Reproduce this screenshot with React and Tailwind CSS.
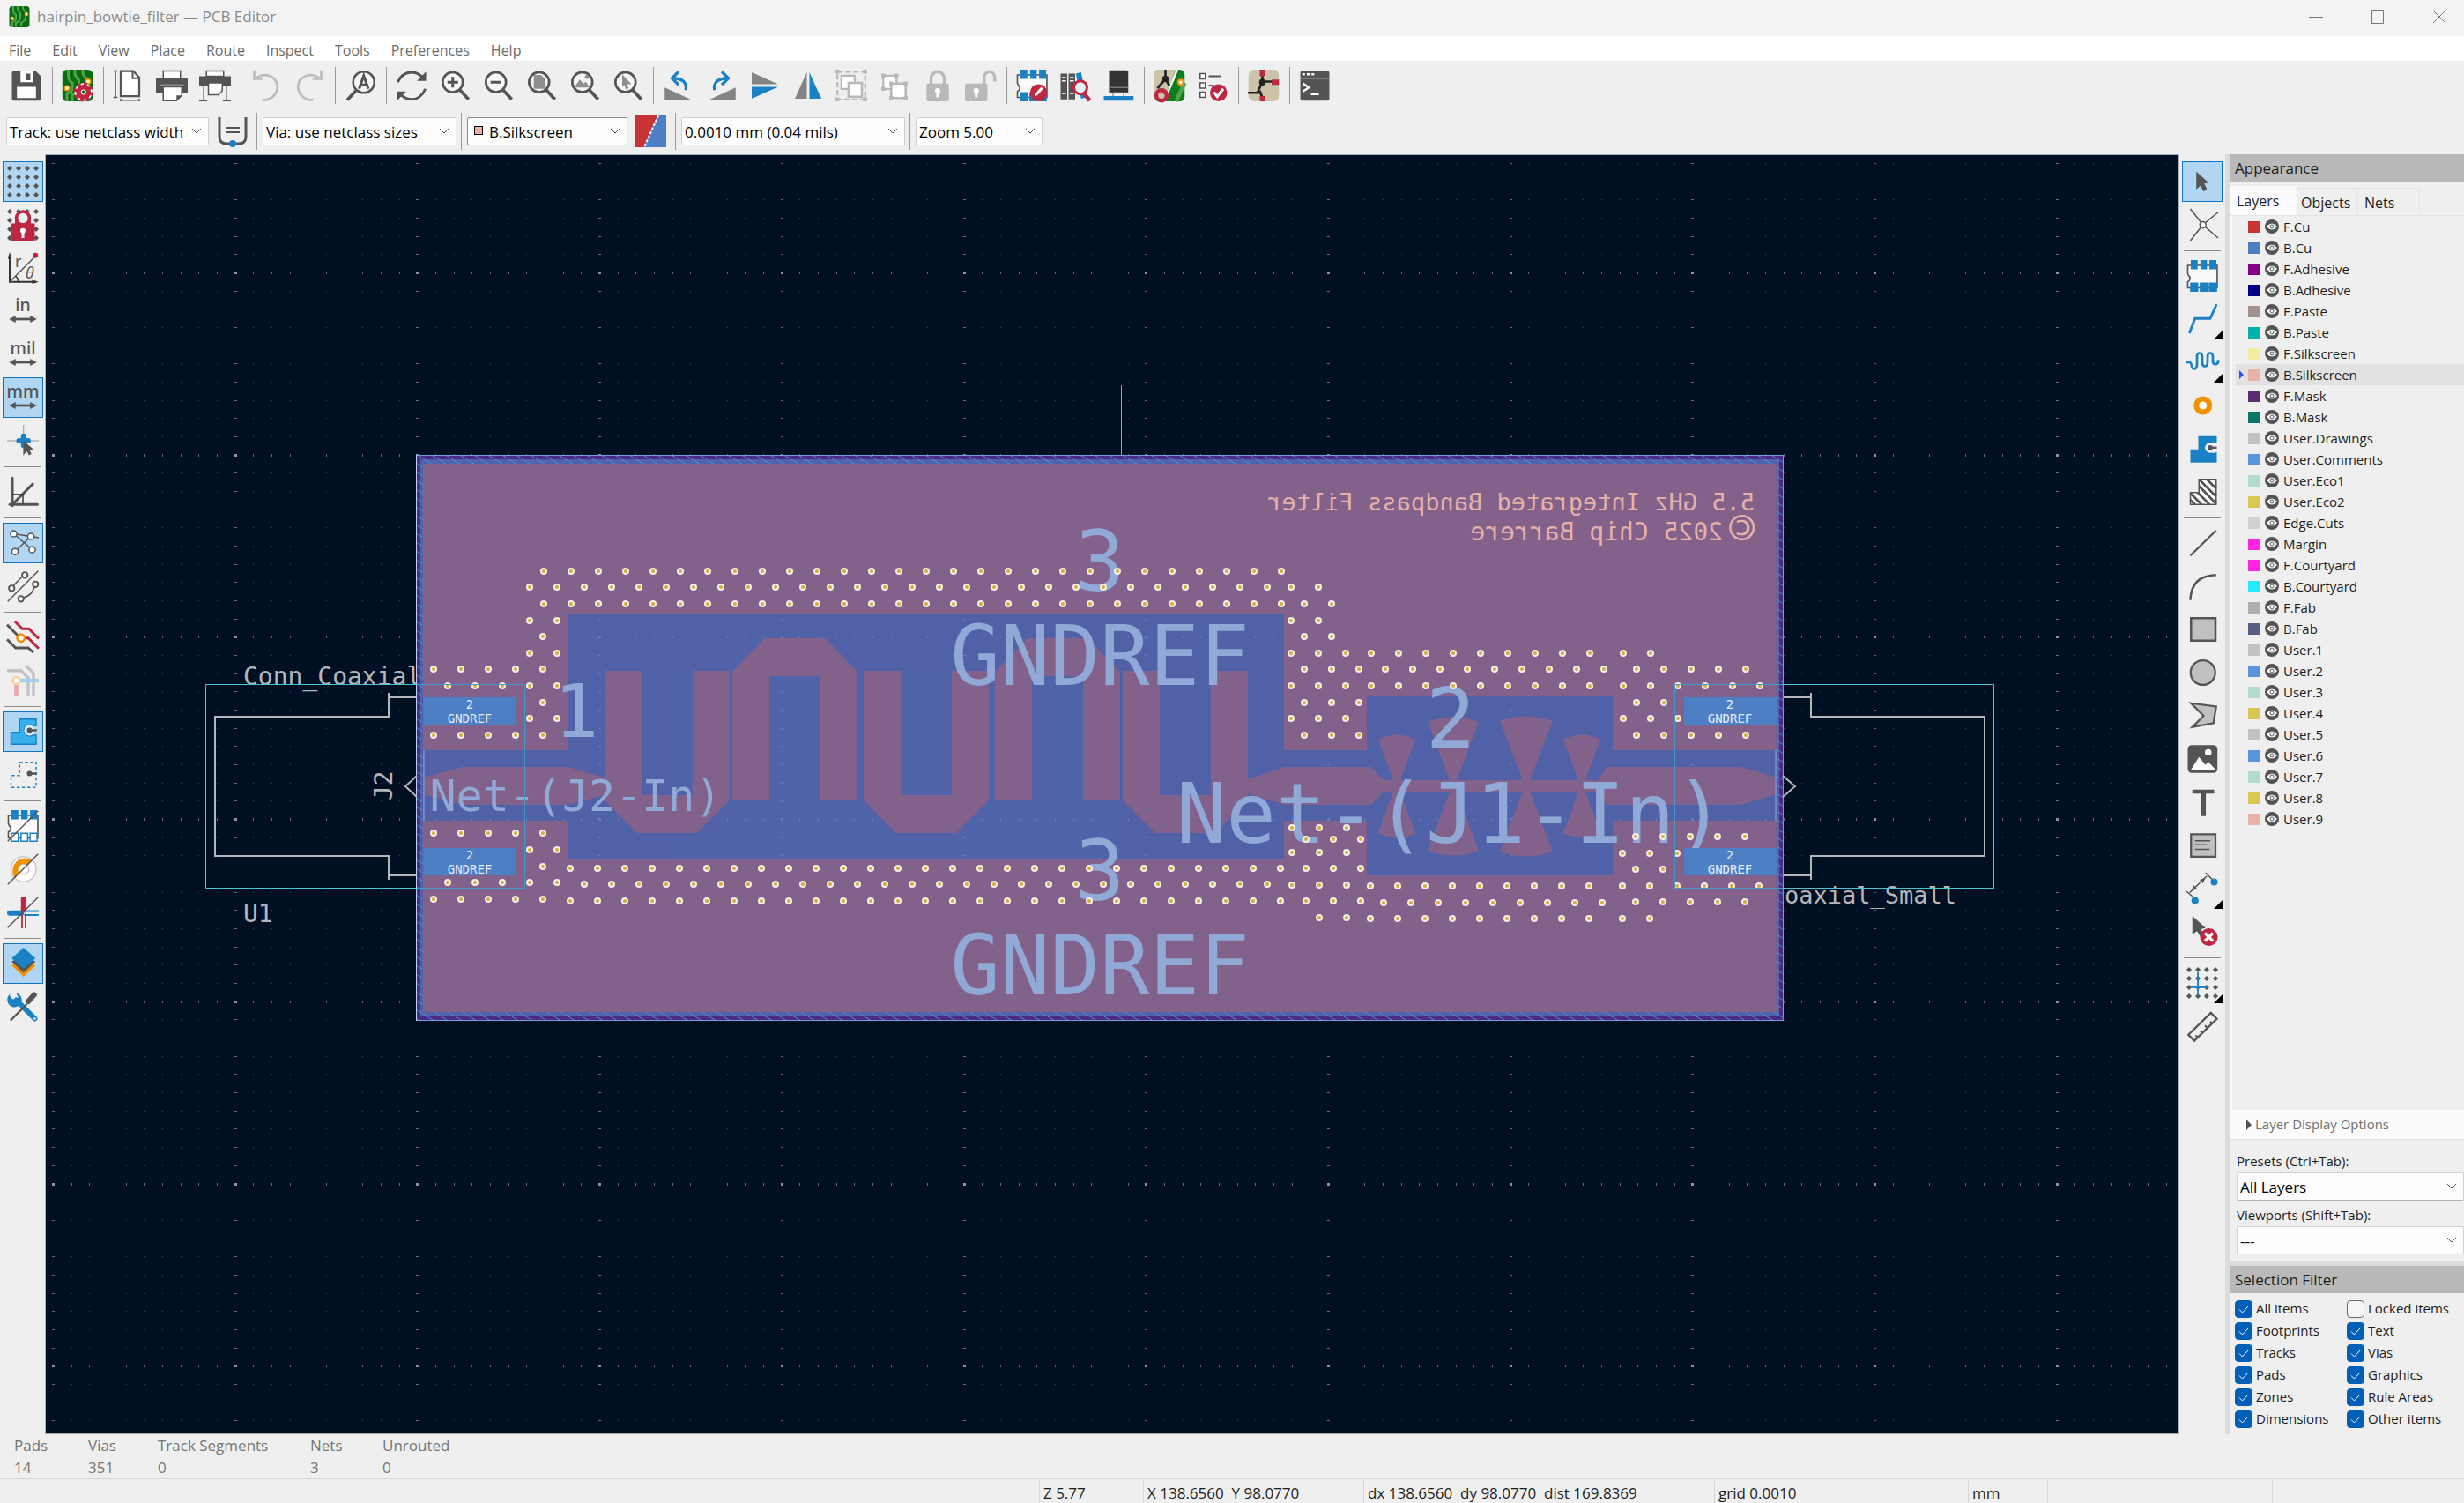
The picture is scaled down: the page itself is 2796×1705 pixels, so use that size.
import React, { useState } from "react";
import clsx from "clsx";

const G = "#545454";
const B = "#1a81c4";
const R = "#bf2641";
const O = "#f29100";
const L = "#b9b9b9";

const DOTS = [2, 8.7, 15.3, 22];

const Dots = () => (
  <g fill={G}>
    {DOTS.map((y) =>
      DOTS.map((x) => <path key={`${x}-${y}`} d={`M${x - 2} ${y}l2-2 2 2-2 2z`} />)
    )}
  </g>
);

const Glass = ({ children }) => (
  <g>
    <circle cx="10.5" cy="9.5" r="7.6" fill="#f6f6f6" stroke={G} strokeWidth="1.8" />
    <path d="M16 15.5l6.5 7" stroke={G} strokeWidth="2.4" />
    {children}
  </g>
);

const Chip = ({ hollow }) => (
  <g>
    <path d="M1 4H23.3V21H1V16.5C3 15.5 3.5 13 1.5 11.5L1 10Z" fill="#fafafa" stroke={G} strokeWidth="1.1" />
    <path d="M3.3 0h5.2v7H3.3zM10.6 0h5v7h-5zM17.4 0h5.3v7h-5.3z" fill={B} />
    <path
      d="M3.3 17.5h5.2v6H3.3zM10.6 17.5h5v6h-5zM17.4 17.5h5.3v6h-5.3z"
      fill={hollow ? "#fff" : B}
      stroke={B}
    />
  </g>
);

const Unit = ({ label }) => (
  <g>
    <text x="12" y="12" textAnchor="middle" fontSize="13" fill={G} className="font-['Noto_Sans'] font-medium">
      {label}
    </text>
    <path d="M5 18H19" stroke={G} strokeWidth="1.8" />
    <path d="M1.5 18l5-2.6v5.2zM22.5 18l-5-2.6v5.2z" fill={G} />
  </g>
);

const BoardArt = () => (
  <g>
    <rect x="0.5" width="23" height="24" rx="3.5" fill="#0a6b14" />
    <path
      d="M5 0v5q0 3 3 5v4q0 3-4 4v6M10 0v3q0 2 3 5v5q0 4-5 6v5M16 0v2q0 2 3 5v6q0 3-5 6v4"
      fill="none"
      stroke="#4ea549"
      strokeWidth="2"
    />
    <circle cx="4" cy="14" r="1.9" fill="#fff1c0" stroke={O} />
    <circle cx="20" cy="9" r="1.9" fill="#fff1c0" stroke={O} />
  </g>
);

const Padlock = ({ open, color }) => (
  <g>
    <path
      d={open ? "M14.5 11V6a4 4.5 0 0 1 8 0v3" : "M7 11V7a5 5.5 0 0 1 10 0v4"}
      fill="none"
      stroke={color}
      strokeWidth="2.2"
    />
    <rect x={open ? 0 : 3.5} y="10.5" width="17" height="13.5" rx="1.5" fill={color} />
    <g transform={open ? "translate(-3.5 0)" : undefined}>
      <circle cx="12" cy="16" r="2" fill="#fff" />
      <path d="M11 16h2v5h-2z" fill="#fff" />
    </g>
  </g>
);

const ICONS = {
  save: (
    <g>
      <path d="M1 2.5Q1 1 2.5 1H19l4 4v17q0 1.5-1.5 1.5h-19Q1 23.5 1 22z" fill={G} />
      <path d="M7.5 1h9.5v8.5H7.5zM4.8 13h14.4v8.5H4.8z" fill="#fff" />
      <path d="M12 3h3v5h-3z" fill={G} />
    </g>
  ),
  boardSetup: (
    <g>
      <BoardArt />
      <circle cx="16.5" cy="17" r="6.8" fill="#fff" />
      <circle cx="16.5" cy="17" r="3.8" fill="none" stroke={R} strokeWidth="3.6" />
      <circle cx="16.5" cy="17" r="6.2" fill="none" stroke={R} strokeWidth="2.4" strokeDasharray="2.6 2.27" />
      <circle cx="16.5" cy="17" r="1.3" fill="#0a6b14" />
    </g>
  ),
  page: (
    <g fill="none" stroke={G}>
      <path d="M6 1h9.5l4.5 5v14H6z" fill="#fff" strokeWidth="1.5" />
      <path d="M15 1v5.5h5" strokeWidth="1.3" />
      <path d="M2 1v20M.5 1h3M.5 21h3M6 23.2h14M6 22v2M20 22v2" strokeWidth="1" />
    </g>
  ),
  print: (
    <g>
      <path d="M5.5 1h13v5.5h-13z" fill="#fff" stroke={G} />
      <path d="M1.5 6h21q1.5 0 1.5 1.5V18H0V7.5Q0 6 1.5 6z" fill={G} />
      <path d="M5.5 13h14v6.5l-4 4h-10z" fill="#fff" stroke={G} />
      <path d="M15.5 23.5v-4h4z" fill={G} />
      <path d="M3 11.5h18" stroke="#8a8a8a" />
    </g>
  ),
  plot: (
    <g>
      <path d="M5.5 1h13v4h-13z" fill="#fff" stroke={G} />
      <path d="M0 5h24v7H0z" fill={G} />
      <path d="M7 10h10.5v6l-3 3H7z" fill="#fff" stroke={G} />
      <path d="M3.5 12v11.5M20.5 12v11.5M0 23.5h6M18 23.5h6M5 9.5h14" stroke={G} />
    </g>
  ),
  undo: (
    <path d="M3 .5v6.500h6.500M3.500 7Q9 3 14 4.500t6.500 7Q21 17 17 20.500T9 22.500" fill="none" stroke="#bcbcbc" strokeWidth="1.800" />
  ),
  redo: (
    <path d="M21 .5v6.500h-6.500M20.500 7Q15 3 10 4.500t-6.500 7Q3 17 7 20.500t8 2" fill="none" stroke="#bcbcbc" strokeWidth="1.800" />
  ),
  find: (
    <g>
      <circle cx="14.5" cy="9.5" r="8" fill="#f6f6f6" stroke={G} strokeWidth="1.7" />
      <path d="M8.5 16L2 23" stroke={G} strokeWidth="2.4" />
      <path d="M11 14.5l3.500-10 3.500 10M12 11.500h5" fill="none" stroke={G} strokeWidth="2" />
    </g>
  ),
  refresh: (
    <g fill="none" stroke={G} strokeWidth="1.9">
      <path d="M1.5 9.5Q5 2 12 2q6 0 9.5 5.5M22.5 14.5Q19 22.5 12 22.5 6 22.5 2.5 17" />
      <path d="M23 1.5v7h-7zM1 23.5v-7h7z" fill={G} stroke="none" />
    </g>
  ),
  zoomIn: <Glass><path d="M10.5 5.5v8M6.5 9.5h8" stroke={G} strokeWidth="2" /></Glass>,
  zoomOut: <Glass><path d="M6.5 9.5h8" stroke={G} strokeWidth="2" /></Glass>,
  zoomPage: <Glass><path d="M6.5 4h5.5l3 3v7.5H6.5z" fill="#8f8f8f" /></Glass>,
  zoomObjects: (
    <Glass>
      <path d="M4.5 13.5l4-6 3 3 1.500-1.500 3.500 4.500z" fill="#8f8f8f" />
      <circle cx="14" cy="5.5" r="1.6" fill="#8f8f8f" />
    </Glass>
  ),
  zoomSelection: <Glass><path d="M8 3.5l7 7.5h-3.500l1.500 3-2 1-1.500-3.500L8 13z" fill="#8f8f8f" /></Glass>,
  rotateCcw: (
    <g>
      <path d="M1.5 13.5v9.5H22z" fill="#848484" />
      <path d="M17.500 15.500Q19 7 8 6.500" fill="none" stroke={B} strokeWidth="2.200" />
      <path d="M12 1.500L7 6.500l5 5" fill="none" stroke={B} strokeWidth="2.200" />
    </g>
  ),
  rotateCw: (
    <g>
      <path d="M22.5 13.5v9.5H2z" fill="#848484" />
      <path d="M6.500 15.500Q5 7 16 6.500" fill="none" stroke={B} strokeWidth="2.200" />
      <path d="M12 1.500l5 5-5 5" fill="none" stroke={B} strokeWidth="2.200" />
    </g>
  ),
  flipV: (
    <g>
      <path d="M2 2v9h20z" fill="#848484" />
      <path d="M2 22v-9h20z" fill={B} />
    </g>
  ),
  flipH: (
    <g>
      <path d="M2 22h9V2z" fill="#848484" />
      <path d="M22 22h-9V2z" fill={B} />
    </g>
  ),
  group: (
    <g fill="none" stroke={L}>
      <path d="M1.5 1.5h21v21h-21z" strokeWidth="1.5" strokeDasharray="4 2" />
      <path d="M4.5 4.5h10v10h-10z" fill="#fff" strokeWidth="1.5" />
      <path d="M10 10h10v10.5H10z" fill="#fff" strokeWidth="1.8" />
      <path d="M0 0h3v3H0zM21 0h3v3h-3zM0 21h3v3H0zM21 21h3v3h-3z" fill={L} stroke="none" />
    </g>
  ),
  ungroup: (
    <g fill="none" stroke={L}>
      <path d="M3.5 4.5h10v10h-10z" fill="#fff" strokeWidth="1.5" />
      <path d="M9.5 10.5h11v11h-11z" fill="#fff" strokeWidth="1.8" />
      <path d="M2 3h3v3H2zM12 3h3v3h-3zM2 13h3v3H2zM8 9h3v3H8zM19 9h3v3h-3zM8 20h3v3H8zM19 20h3v3h-3z" fill={L} stroke="none" />
    </g>
  ),
  lock: <Padlock color={L} />,
  unlock: <Padlock color={L} open />,
  fpEditor: (
    <g>
      <Chip />
      <circle cx="17" cy="17.5" r="6.5" fill={R} />
      <path d="M14 20.5l1-3 4-4.500 1.500 1.500-4 4.500z" fill="#fff" />
    </g>
  ),
  library: (
    <g>
      <path d="M1 3h5v19.5H1zM7 3h5v19.5H7z" fill={G} />
      <path d="M12.5 3l4-1 4 19-4 1z" fill={B} />
      <path d="M2 6h3M2 8.5h3M2 18h3M8 6h3M8 8.5h3M8 18h3" stroke="#fff" />
      <circle cx="16" cy="13.5" r="5" fill="#e6f1f8" stroke={R} strokeWidth="2" />
      <path d="M18.5 17.5l4.5 6" stroke={R} strokeWidth="3" />
    </g>
  ),
  package3d: (
    <g>
      <rect x="5" y="0.5" width="14.5" height="17.5" rx="1" fill="#333" />
      <path d="M5 13.5h14.5M6 17.5h12.5" stroke="#777" />
      <path d="M8 18v2M16 18v2" stroke="#999" />
      <path d="M1 20h22.5v3.5H1z" fill={B} />
    </g>
  ),
  updatePcb: (
    <g>
      <rect x="0.5" width="23" height="24" rx="3.5" fill="#0a7d1c" />
      <path d="M4 0h13L7 24H4q-3.5 0-3.5-3.5v-17Q.5 0 4 0z" fill="#cbc4a8" />
      <path d="M18 0L8 24" stroke="#fff" strokeWidth="1.6" />
      <path d="M23.5 10L17 24" stroke="#4ea549" strokeWidth="3" />
      <path d="M9 0v7L3 14M9 7l3 5" stroke="#222" strokeWidth="1.8" fill="none" />
      <circle cx="9" cy="7" r="2.5" fill="#222" />
      <circle cx="20.5" cy="9.5" r="2" fill="#fff" stroke={O} strokeWidth="1.5" />
      <circle cx="6" cy="19.5" r="4" fill="none" stroke={R} strokeWidth="3" />
      <path d="M6 15l6 6" stroke={R} strokeWidth="2.5" />
    </g>
  ),
  drc: (
    <g>
      <path d="M2.5 3h4v4h-4zM2.5 10h4v4h-4zM2.5 17h4v4h-4z" fill="#fff" stroke={G} />
      <path d="M9 5h9M9 12h4" stroke={G} strokeWidth="1.2" />
      <circle cx="16.5" cy="17.5" r="6.5" fill={R} />
      <path d="M13 17l2.5 3.5 4.5-6" fill="none" stroke="#fff" strokeWidth="2" />
    </g>
  ),
  schematic: (
    <g>
      <rect x="0.5" width="23" height="24" rx="4" fill="#cbc4a8" />
      <path d="M11 0v10M11 9h7M11 9l-4 9M0 17.5h9M9 16l3 8" stroke="#222" strokeWidth="1.8" />
      <circle cx="11" cy="9.5" r="2.5" fill="#222" />
      <path d="M9 0h4v5H9zM18 7.5h5.5v4H18zM9 20h4v4H9z" fill={R} />
    </g>
  ),
  terminal: (
    <g>
      <rect x="1" y="1" width="22" height="22.5" rx="1.5" fill={G} />
      <path d="M1 6.5h22" stroke="#fff" strokeWidth="0.8" />
      <path d="M2.5 3.5h2M6 3.5h2M9.5 3.5h2" stroke="#fff" strokeWidth="1.8" />
      <path d="M3 10.5l4.5 3-4.5 3M9 18.5h6" fill="none" stroke="#fff" strokeWidth="1.6" />
    </g>
  ),
  dots: <Dots />,
  dotsLock: (
    <g>
      <Dots />
      <circle cx="12" cy="7" r="5" fill="#efefef" stroke={R} strokeWidth="2.4" />
      <path d="M6 7h2.200v5H6zM15.800 7H18v5h-2.200zM3 11h18v13H3z" fill={R} />
      <circle cx="12" cy="16.500" r="2" fill="#fff" />
      <path d="M11 17h2v5h-2z" fill="#fff" />
    </g>
  ),
  polar: (
    <g fill="none" stroke="#333">
      <path d="M2 2v20.5h20" strokeWidth="1.3" />
      <path d="M2 22.5L21 3.5" stroke={G} />
      <path d="M6.5 18Q8.5 20 8.5 22.5" />
      <path d="M.5 5L2 0l1.500 5zM19 21l5 1.500-5 1.500z" fill="#333" stroke="none" />
      <circle cx="21.5" cy="2.5" r="2" fill={R} stroke="none" />
      <text x="6" y="11" fontSize="12" fill={G} stroke="none" className="font-['Noto_Sans']">r</text>
      <text x="14" y="20" fontSize="12" fill={G} stroke="none" className="font-['Noto_Sans'] italic">θ</text>
    </g>
  ),
  inch: <Unit label="in" />,
  mil: <Unit label="mil" />,
  mm: <Unit label="mm" />,
  cursor: (
    <g>
      <path d="M0 12h24M12.5 0v23" stroke="#999" strokeWidth="0.7" />
      <path d="M12.5 8.5v7M9 12h7" stroke={B} strokeWidth="4" strokeLinecap="round" />
      <path d="M12.5 12l7.500 6.500-3 .5 1.500 3-2 1-1.500-3-2.500 2.500z" fill={G} />
    </g>
  ),
  angle45: (
    <g stroke={G} fill="none">
      <path d="M4 1.5v21M2 21.5h21M4 21.5L19.5 6" strokeWidth="2" strokeLinecap="round" />
      <path d="M4 14h8v7" stroke="#222" strokeWidth="0.9" />
    </g>
  ),
  ratsnest: (
    <g stroke={G} fill="#fff">
      <path d="M5 5l14 12M6 18.5L18 7M5 5l19 3" />
      <circle cx="5" cy="5" r="2.4" />
      <circle cx="18" cy="7" r="2.4" />
      <circle cx="6" cy="18.5" r="2.4" />
      <circle cx="19" cy="17" r="2.4" />
    </g>
  ),
  ratsnestCurved: (
    <g stroke={G} fill="none">
      <path d="M.5 23.5l23-23M3.5 13L13 3M10.5 21q9-1 11-11" />
      <g fill="#fff" strokeWidth="1.3">
        <circle cx="3.5" cy="13.5" r="2.1" />
        <circle cx="13.5" cy="3.5" r="2.1" />
        <circle cx="10.5" cy="21.5" r="2.1" />
        <circle cx="21.5" cy="10.5" r="2.1" />
      </g>
    </g>
  ),
  contrast: (
    <g fill="none" strokeWidth="1.9">
      <path d="M0 2.5l9 9M0 13.5l6.500 6.500h9.500l4 3.500" stroke={G} />
      <path d="M6 0l5.500 5.500h5l7.500 7.500M12 12.500h4l8 8" stroke={R} />
      <circle cx="10.5" cy="12.5" r="2.8" fill="#fff" stroke={O} strokeWidth="1.7" />
    </g>
  ),
  netColors: (
    <g fill="none" strokeWidth="2.2">
      <path d="M0 4.5h10.500l5.500 5.500v14M14 .5l6 6V24" stroke="#c2c2c2" />
      <path d="M10 12h14" stroke="#a3cfe8" strokeWidth="3" />
      <path d="M7 14v10" stroke="#e8a9b4" strokeWidth="3.2" />
      <circle cx="7" cy="12" r="2.7" fill="#fff" stroke="#f9d39a" strokeWidth="1.7" />
    </g>
  ),
  zoneFill: (
    <g>
      <path d="M9.5 2.5H22V7.500H19.500a4.200 4.200 0 1 0 0 7H22v7H3v-9h6.500z" fill="#35b0ea" stroke={B} />
      <circle cx="17" cy="11" r="4" fill="#d8ecf9" />
      <circle cx="17" cy="11" r="2" fill={G} />
      <path d="M17 11h5.500" stroke={G} strokeWidth="1.700" />
    </g>
  ),
  zoneOutline: (
    <g>
      <path d="M9.5 2.5H22v19H3v-9h6.500z" fill="none" stroke={B} strokeDasharray="2.2 1.8" />
      <circle cx="17" cy="11" r="2" fill={G} />
      <path d="M17 11h5.5" stroke={G} strokeWidth="1.7" />
    </g>
  ),
  padOutline: (
    <g>
      <Chip hollow />
      <path d="M.5 23.5l23-23" stroke={G} />
    </g>
  ),
  viaOutline: (
    <g fill="none">
      <circle cx="12.5" cy="12" r="9.5" fill="#fff" stroke="#c8c8c8" />
      <circle cx="12.5" cy="12" r="4" stroke="#c8c8c8" />
      <path d="M6 18.5A9.3 9.3 0 0 1 19 5.5L15.5 9a4.5 4.5 0 0 0-6.500 6z" fill={O} />
      <path d="M.5 23.5l23-23" stroke={G} />
    </g>
  ),
  trackOutline: (
    <g fill="none">
      <path d="M2 12.5h9" stroke={B} strokeWidth="4" strokeLinecap="round" />
      <path d="M13 11h11M13 14h11" stroke={B} strokeWidth="1.2" />
      <path d="M12.5 2v8" stroke={R} strokeWidth="4" strokeLinecap="round" />
      <path d="M11.3 13v11M14 13v11" stroke={R} strokeWidth="1.2" />
      <path d="M.5 23.5l23-23" stroke={G} />
    </g>
  ),
  layers: (
    <g>
      <path d="M3.5 13.500l9 8.500 9-8.500-9-5z" fill={O} />
      <path d="M3.5 10.500l9 8.500 9-8.500-9-5z" fill={G} />
      <path d="M3.5 8l9-8 9 8-9 8z" fill={B} />
    </g>
  ),
  tools: (
    <g>
      <path d="M7 7l14 14" stroke={B} strokeWidth="4" strokeLinecap="round" />
      <path d="M4 1.500a5.500 5.500 0 1 0 7 6.500 5.500 5.500 0 0 0-4-6.500L8.500 5 6 7 3 5.500 2 3z" fill={B} />
      <circle cx="21" cy="21" r="0.9" fill="#fff" />
      <path d="M2.5 22.5L15 10" stroke={G} strokeWidth="1.5" />
      <path d="M16 8l4.500-5" stroke={G} strokeWidth="4" strokeLinecap="round" />
    </g>
  ),
  select: <path d="M7.5 4.5l9.500 8.500-3.500.5 2 4-2.500 2-2.500-4.500-3 3z" fill={G} />,
  localRats: (
    <g stroke={G}>
      <path d="M3 0l9.5 12L3 24M24 2.5L12.5 12 24 22" fill="none" />
      <circle cx="12.5" cy="12" r="2.3" fill="#fff" />
    </g>
  ),
  footprint: <Chip />,
  route: <path d="M2.5 22l4-10.5H18L22.5 1.5" fill="none" stroke={B} strokeWidth="1.9" strokeLinecap="round" />,
  tune: (
    <path
      d="M0 12h2.5q1 0 1.5 3 .5 2 2 2t2-3V8q0-3 2-3t2 3v4q0 3 2 3t2-3V8q0-3 2-3t2 3v3q0 2.5 2 2.5t2-2.5h1"
      fill="none"
      stroke={B}
      strokeWidth="1.8"
    />
  ),
  via: <circle cx="12.5" cy="12" r="5" fill="#fff" stroke={O} strokeWidth="4" />,
  zone: (
    <g>
      <path d="M9 2.5h14V8a4 4 0 1 0 0 6.5v8H3v-10h6z" fill={B} />
      <circle cx="18" cy="11.200" r="3.900" fill="#efefef" />
      <path d="M18 9h5v4.500h-5z" fill="#efefef" />
      <circle cx="18" cy="11.2" r="1.9" fill={G} />
      <path d="M18 11.2h5" stroke={G} strokeWidth="1.6" />
    </g>
  ),
  ruleArea: (
    <g fill="none" stroke={G}>
      <path d="M9.5 2.5h13v19H3v-9h6.5z" fill="#fff" />
      <path d="M3 13l8.5 8.5M3 18l3.5 3.5M8.5 12.5l9 9M9.5 7.5l13 13.5M9.5 2.5l13 13M15.5 2.5l7 7" strokeWidth="1.8" />
    </g>
  ),
  line: <path d="M3 21.5L22.5 2.5" stroke={G} strokeWidth="1.5" />,
  arc: <path d="M3 22.5Q3.5 4 22.5 3.5" fill="none" stroke={G} strokeWidth="1.7" />,
  rect: <path d="M3.5 3.5h18.5v17H3.5z" fill="#c0c0c0" stroke={G} strokeWidth="1.7" />,
  circle: <circle cx="12.5" cy="12" r="9.3" fill="#c0c0c0" stroke={G} strokeWidth="1.5" />,
  polygon: <path d="M3.5 2.5l19 2.5-2 12.5-16 3 8.5-8.5z" fill="#c0c0c0" stroke={G} strokeWidth="1.5" />,
  image: (
    <g>
      <rect x="1" y="1.5" width="22.5" height="21" rx="3" fill={G} />
      <path d="M3.5 20l6-9.5 5 6 2-2.5 5.5 6z" fill="#fff" />
      <circle cx="16.5" cy="7" r="2.5" fill="#fff" />
    </g>
  ),
  text: <path d="M4.5 2.500h16.500v3h-6.300v17h-4v-17H4.500z" fill={G} />,
  textbox: (
    <g stroke={G}>
      <path d="M3.5 3.5h18.5v17H3.5z" fill="#c0c0c0" strokeWidth="1.5" />
      <path d="M6.5 8.5h11.5M6.5 11.5h9M6.5 15h11" strokeWidth="1.1" />
    </g>
  ),
  dimension: (
    <g stroke={G}>
      <path d="M2.5 15L15.5 2.5M0 14l7 6M14.5 0l6 6" />
      <path d="M3.5 14l4.500-2-2.500-2.500zM14.500 3.500L10 5.500l2.500 2.500z" fill={G} stroke="none" />
      <circle cx="6.5" cy="21" r="2.7" fill={B} stroke="none" />
      <circle cx="21" cy="7" r="2.7" fill={B} stroke="none" />
    </g>
  ),
  remove: (
    <g>
      <path d="M4.5 0l10 9-3.500 1 2 4-2.500 1.500-2.500-4L4.500 14z" fill={G} />
      <circle cx="17" cy="16" r="6.7" fill={R} />
      <path d="M14 13l6 6M20 13l-6 6" stroke="#fff" strokeWidth="2.2" />
    </g>
  ),
  gridOrigin: (
    <g>
      <Dots />
      <path d="M8.7 4v18M3 15.3h13" stroke={B} strokeWidth="1.2" />
    </g>
  ),
  measure: (
    <g fill="none" stroke={G} strokeWidth="1.6">
      <path d="M1.5 18.5l17-16.500 4.500 4.500L6 23z" />
      <path d="M8.500 20.500L7 19M12 17l-1.500-1.500M16 13.500L14 11.500M19.500 10L18 8.500" strokeWidth="1.300" />
    </g>
  ),
};

const Icon = ({ name }) => (
  <svg viewBox="0 0 24 24" className="h-9 w-9 overflow-visible" aria-hidden="true">
    {ICONS[name]}
  </svg>
);

const ToolButton = ({ name, active, more }) => (
  <button
    type="button"
    aria-label={name}
    className={clsx(
      "relative flex h-[46px] w-[46px] shrink-0 items-center justify-center",
      active && "border border-[#1173c4] bg-[#b1d6f3]"
    )}
  >
    <Icon name={name} />
    {more && (
      <svg viewBox="0 0 10 10" className="absolute right-0 bottom-0 h-2.5 w-2.5">
        <path d="M10 0v10H0z" />
      </svg>
    )}
  </button>
);

const TOP_TOOLS = [
  "save", "|", "boardSetup", "|", "page", "print", "plot", "|", "undo", "redo", "|", "find", "|",
  "refresh", "zoomIn", "zoomOut", "zoomPage", "zoomObjects", "zoomSelection", "|",
  "rotateCcw", "rotateCw", "flipV", "flipH", "group", "ungroup", "lock", "unlock", "|",
  "fpEditor", "library", "package3d", "|", "updatePcb", "drc", "|", "schematic", "|", "terminal",
];

const LEFT_TOOLS = [
  "dots", "dotsLock", "polar", "inch", "mil", "mm", "cursor", "|", "angle45", "|", "ratsnest",
  "ratsnestCurved", "|", "contrast", "netColors", "|", "zoneFill", "zoneOutline", "|",
  "padOutline", "viaOutline", "trackOutline", "|", "layers", "tools",
];

const RIGHT_TOOLS = [
  "select", "localRats", "|", "footprint", "route", "tune", "via", "zone", "ruleArea", "|",
  "line", "arc", "rect", "circle", "polygon", "image", "text", "textbox", "dimension", "remove",
  "|", "gridOrigin", "measure",
];

const ACTIVE = ["dots", "mm", "ratsnest", "zoneFill", "layers", "select"];
const MORE = ["route", "tune", "dimension", "gridOrigin"];

const SideBar = ({ tools, className }) => (
  <div className={clsx("flex shrink-0 flex-col items-center gap-[3px] pt-2", className)}>
    {tools.map((t, i) =>
      t === "|" ? (
        <div key={i} className="flex h-1.5 w-[42px] items-center">
          <div className="h-px w-full bg-[#8c8c8c]" />
        </div>
      ) : (
        <ToolButton key={i} name={t} active={ACTIVE.includes(t)} more={MORE.includes(t)} />
      )
    )}
  </div>
);

const Combo = ({ label, value, className, strong, swatch }) => (
  <div className={clsx("relative h-8", className)}>
    <select
      aria-label={label}
      className={clsx(
        "h-full w-full appearance-none rounded-[2px] border bg-[#fdfdfd] pt-0.5 pr-6 text-[17px] leading-6 text-black",
        strong ? "border-[#8a8a8a]" : "border-[#d0d0d0] border-b-[#b4b4b4]",
        swatch ? "pl-6" : "pl-[3px]"
      )}
    >
      <option>{value}</option>
    </select>
    {swatch && <span className="absolute top-2.5 left-2 h-2.5 w-2.5 border border-black bg-[#e8b2a7]" />}
    <svg viewBox="0 0 12 7" className="absolute top-3 right-2 h-[7px] w-3" fill="none" stroke="#555">
      <path d="M1 1l5 5 5-5" />
    </svg>
  </div>
);

const Bar = () => <div className="h-[42px] w-px bg-[#9a9a9a]" />;

// board drawing

const run = (x, y, n) => Array.from({ length: n }, (_, i) => [x + i * 31, y]);

const VIAS = [
  ...run(617, 648, 28),
  ...run(601, 666, 28), ...run(1465, 666, 2),
  ...run(617, 685, 28), ...run(1480, 685, 2),
  ...run(601, 704, 2), ...run(1465, 704, 2),
  ...run(616, 722, 1), ...run(1480, 722, 2),
  ...run(601, 741, 2), ...run(1465, 741, 3), ...run(1556, 741, 9), ...run(1842, 741, 2),
  ...run(492, 759, 5), ...run(1480, 759, 3), ...run(1572, 759, 9), ...run(1857, 759, 5),
  ...run(508, 778, 5), ...run(1465, 778, 3), ...run(1556, 778, 9), ...run(1842, 778, 6),
  ...run(616, 797, 1), ...run(1480, 797, 3), ...run(1857, 797, 2),
  ...run(601, 815, 2), ...run(1465, 815, 3), ...run(1842, 815, 3),
  ...run(492, 834, 5), ...run(1480, 834, 3), ...run(1857, 834, 5),
  ...run(492, 945, 5), ...run(1466, 939, 3), ...run(1482, 952, 3), ...run(1856, 949, 5),
  ...run(601, 964, 2), ...run(1466, 967, 3), ...run(1841, 968, 3),
  ...run(616, 983, 1), ...run(647, 985, 27), ...run(1482, 985, 3), ...run(1856, 986, 2),
  ...run(508, 1001, 5), ...run(663, 1003, 26), ...run(1466, 1004, 3), ...run(1555, 1005, 9), ...run(1841, 1005, 6),
  ...run(492, 1020, 5), ...run(647, 1022, 27), ...run(1482, 1022, 3), ...run(1570, 1024, 9), ...run(1856, 1023, 5),
  ...run(1497, 1041, 2), ...run(1555, 1042, 9), ...run(1841, 1042, 2),
];

const GRID = 206.7;
const X0 = 60;
const Y0 = 309;

const grid = { minor: "", tick: "", major: "" };
for (let j = -6; j < 66; j++) {
  const y = Math.round(Y0 + (j * GRID) / 10);
  for (let i = 0; i < 118; i++) {
    const x = Math.round(X0 + (i * GRID) / 10);
    const mx = i % 10 === 0;
    const my = j % 10 === 0;
    if (mx && my) grid.major += `M${x - 1} ${y - 1}h3v3h-3z`;
    else if (mx) grid.tick += `M${x - 1} ${y}h3v1h-3z`;
    else if (my) grid.tick += `M${x} ${y - 1}h1v3h-1z`;
    else grid.minor += `M${x} ${y}h1v1h-1z`;
  }
}

const GridDots = () => (
  <g shapeRendering="crispEdges">
    <path d={grid.minor} fill="#39475c" />
    <path d={grid.tick} fill="#5f6c80" />
    <path d={grid.major} fill="#8793a5" />
  </g>
);

const CUTOUT = "M480 851H645V696H1457V851H1551V789H1830V851H2016V931H1830V993H1551V931H1457V974H645V931H480Z";

const hairpinUp = (x) => `M${x} 761h42v141h58V761h42V908l-37 37h-68L${x} 908z`;
const hairpinDown = (x) => `M${x} 908V762l37-38h68l37 38V908h-42V767h-58V908z`;

const bowtie = (x, w, top) => {
  const h = 892 - top;
  return (
    `M${x - 4} 885L${x - w} ${top + 6}Q${x} ${top - 5} ${x + w} ${top + 6}L${x + 4} 885V898` +
    `L${x + w} ${892 + h - 6}Q${x} ${892 + h + 5} ${x - w} ${892 + h - 6}L${x - 4} 898Z`
  );
};

const Pad = ({ x, y }) => (
  <g>
    <rect x={x} y={y} width="105" height="31" fill="#4d7fc4" />
    <g fill="#e6edf8" textAnchor="middle" fontSize="14">
      <text x={x + 52} y={y + 13}>2</text>
      <text x={x + 52} y={y + 29}>GNDREF</text>
    </g>
  </g>
);

const BoardCanvas = () => (
  <svg
    viewBox="52 176 2420 1450"
    preserveAspectRatio="xMidYMid slice"
    className="h-full w-full font-['DejaVu_Sans_Mono',monospace]"
    role="img"
    aria-label="Board layout"
  >
    <defs>
      <pattern id="hatch" width="16" height="10" patternUnits="userSpaceOnUse">
        <path d="M0 0l16 10" stroke="#4a8fd6" strokeWidth="1" />
      </pattern>
      <clipPath id="cutout">
        <path d={CUTOUT} />
      </clipPath>
    </defs>
    <rect x="52" y="176" width="2420" height="1450" fill="#000f22" />
    <GridDots />

    <g fill="#b3b6bb" fontSize="28">
      <text x="276" y="777">Conn_Coaxial</text>
      <text x="276" y="1046">U1</text>
      <text x="2025" y="1025" fontSize="27">oaxial_Small</text>
      <text transform="translate(445 908) rotate(-90)">J2</text>
    </g>
    <g fill="none" stroke="#b3b6bb" strokeWidth="2">
      <path d="M474 791H441M441 786V813H244V971H441V998M441 993H474" />
      <path d="M2022 791H2055M2055 786V813H2252V971H2055V998M2055 993H2022" />
    </g>

    <rect x="472" y="516" width="1552" height="642" fill="#6f9ee0" />
    <rect x="473" y="517" width="1550" height="640" fill="#4c2a86" />
    <rect x="477" y="521" width="1542" height="632" fill="#5062a8" />
    <path d="M473 517H2023V1157H473ZM480 526V1148H2016V526Z" fillRule="evenodd" fill="url(#hatch)" />
    <path d="M472.5 516V1158" stroke="#b9d3f5" />
    <rect x="480" y="526" width="1536" height="622" fill="#82618b" />

    <path d={CUTOUT} fill="#5062a8" />
    <g clipPath="url(#cutout)" opacity="0.4">
      <g shapeRendering="crispEdges" fill="#8fa0d8">
        <path d={grid.tick} />
        <path d={grid.major} />
      </g>
    </g>
    <g fill="#82618b">
      <path d="M480 882L524 870H645L686 882V902L645 913H524L480 901Z" />
      <path d={hairpinUp(686)} />
      <path d={hairpinDown(831)} />
      <path d={hairpinUp(980)} />
      <path d={hairpinDown(1129)} />
      <path d={hairpinUp(1274)} />
      <path d="M1416 884L1458 870H1556L1570 885H1813L1823 870H1975L2016 882V901L1975 913H1823L1813 898H1570L1556 913H1458L1416 900Z" />
      <path d={bowtie(1585, 21, 833)} />
      <path d={bowtie(1649, 29, 813)} />
      <path d={bowtie(1732, 30, 812)} />
      <path d={bowtie(1795, 21, 833)} />
    </g>
    <path d="M481 851V931M2015 851V931" stroke="#7583c9" strokeWidth="2" />

    <g fill="#90a9d6" textAnchor="middle" fontSize="94">
      <text x="1248" y="670">3</text>
      <text x="1248" y="777">GNDREF</text>
      <text x="1248" y="1021">3</text>
      <text x="1248" y="1128">GNDREF</text>
      <text x="1646" y="848">2</text>
      <text x="1646" y="956">Net-(J1-In)</text>
      <text x="654" y="836" fontSize="84">1</text>
      <text x="653" y="920" fontSize="50">Net-(J2-In)</text>
    </g>

    {VIAS.map(([x, y], i) => (
      <g key={i}>
        <circle cx={x} cy={y} r="4" fill="#f6efe6" />
        <circle cx={x} cy={y} r="2" fill="#d4ad3c" />
      </g>
    ))}

    <Pad x={481} y={791} />
    <Pad x={481} y={962} />
    <Pad x={1911} y={791} />
    <Pad x={1911} y={962} />

    {/* bottom silkscreen reads mirrored from the front */}
    <g transform="translate(1991 0) scale(-1 1)" fill="#e5b1a8" fontSize="27">
      <text x="0" y="579">5.5 GHz Integrated Bandpass Filter</text>
      <text x="0" y="616" fontSize="48">©</text>
      <text x="36" y="613" fontSize="28">2025 Chip Barrere</text>
    </g>

    <g fill="none" strokeWidth="1" stroke="#4cc3d0">
      <path d="M474 776.5H233.5V1007.5H474M2022 776.5H2262.5V1007.5H2022" />
      <path d="M474 776.5H595.5V1007.5H474M2022 776.5H1900.5V1007.5H2022" stroke="#4397cd" />
    </g>
    <path d="M473 880L460 892L473 904M2023 880L2037 892L2023 904" fill="none" stroke="#b3b6bb" strokeWidth="2" />
    <path d="M1232 476.5H1313M1272.5 437V516" stroke="#9a9fa8" />
  </svg>
);

const LAYERS = [
  ["F.Cu", "#c83434"], ["B.Cu", "#4d7fc4"], ["F.Adhesive", "#840084"], ["B.Adhesive", "#000084"],
  ["F.Paste", "#a2918c"], ["B.Paste", "#00b2ac"], ["F.Silkscreen", "#f2eda1"], ["B.Silkscreen", "#e8b2a7"],
  ["F.Mask", "#5c2d6e"], ["B.Mask", "#0b7566"], ["User.Drawings", "#c2c2c2"], ["User.Comments", "#5994dc"],
  ["User.Eco1", "#b4dbd2"], ["User.Eco2", "#d8c852"], ["Edge.Cuts", "#d0d2cd"], ["Margin", "#ff26e2"],
  ["F.Courtyard", "#ff26e2"], ["B.Courtyard", "#26e9ff"], ["F.Fab", "#afafaf"], ["B.Fab", "#585d84"],
  ["User.1", "#c2c2c2"], ["User.2", "#5994dc"], ["User.3", "#b4dbd2"], ["User.4", "#d8c852"],
  ["User.5", "#c2c2c2"], ["User.6", "#5994dc"], ["User.7", "#b4dbd2"], ["User.8", "#d8c852"],
  ["User.9", "#e8b2a7"],
];

const FILTERS = [
  "All items", "Locked items", "Footprints", "Text", "Tracks", "Vias", "Pads", "Graphics",
  "Zones", "Rule Areas", "Dimensions", "Other items",
];

const Eye = () => (
  <svg viewBox="0 0 16 16" className="h-4 w-4" fill="none">
    <circle cx="8" cy="8" r="8" fill={G} />
    <path d="M2 8q6-7 12 0-6 7-12 0z" fill="#fff" />
    <circle cx="8" cy="8" r="2" stroke={G} />
  </svg>
);

const LayerRow = ({ name, color, selected, onSelect }) => (
  <li className={clsx("ml-1 flex h-6 items-center", selected && "bg-[#e1e1e1]")}>
    <span className="flex w-3.5 shrink-0 pl-1">
      {selected && (
        <svg viewBox="0 0 5 10" className="h-2.5 w-[5px]" fill="#3d4be8">
          <path d="M0 0l5 5-5 5z" />
        </svg>
      )}
    </span>
    <span className="h-[13px] w-[13px] shrink-0" style={{ backgroundColor: color }} />
    <button type="button" aria-label={`Toggle ${name}`} className="ml-1.5 shrink-0">
      <Eye />
    </button>
    <button type="button" onClick={onSelect} className="ml-[5px] text-left text-[15px] leading-6 text-[#1c1c1c]">
      {name}
    </button>
  </li>
);

const FilterBox = ({ label }) => {
  const [on, setOn] = useState(label !== "Locked items");
  return (
    <label className="flex h-[25px] items-center gap-1 text-[15px] whitespace-nowrap text-[#1c1c1c]">
      <span className="relative flex">
        <input
          type="checkbox"
          checked={on}
          onChange={() => setOn(!on)}
          className="h-5 w-5 appearance-none rounded border border-[#6a6a6a] bg-[#f6f6f6] checked:border-[#005fb8] checked:bg-[#005fb8]"
        />
        {on && (
          <svg viewBox="0 0 20 20" className="pointer-events-none absolute inset-0" fill="none" stroke="#fff">
            <path d="M5 10.5l3.5 3.5L15 7" />
          </svg>
        )}
      </span>
      {label}
    </label>
  );
};

const PanelTitle = ({ children }) => (
  <h2 className="h-[31px] shrink-0 bg-[#b9b9b9] pl-[5px] text-[17px] leading-[31px] text-[#1c1c1c]">{children}</h2>
);

const AppearancePanel = () => {
  const [active, setActive] = useState("B.Silkscreen");
  return (
    <aside className="flex w-[265px] shrink-0 flex-col">
      <PanelTitle>Appearance</PanelTitle>
      <div className="flex h-[39px] shrink-0 items-end border-b border-[#e4e4e4] text-[16px] text-[#1c1c1c]">
        <button type="button" className="h-[33px] w-[75px] bg-[#fbfbfb] pl-[7px] text-left leading-8">Layers</button>
        <button type="button" className="h-[31px] w-[70px] border-t border-r border-[#e4e4e4] pl-[5px] text-left leading-8">Objects</button>
        <button type="button" className="h-[31px] w-[70px] border-t border-r border-[#e4e4e4] pl-[7px] text-left leading-8">Nets</button>
      </div>
      <ul className="min-h-0 flex-1 border-l-2 border-[#fbfbfb]">
        {LAYERS.map(([name, color]) => (
          <LayerRow
            key={name}
            name={name}
            color={color}
            selected={name === active}
            onSelect={() => setActive(name)}
          />
        ))}
      </ul>
      <button
        type="button"
        className="flex h-[34px] shrink-0 items-center gap-1 border-b border-[#dedede] bg-[#fcfcfc] pl-[18px] text-[15px] text-[#707070]"
      >
        <svg viewBox="0 0 6 12" className="h-3 w-1.5" fill={G}>
          <path d="M0 0l6 6-6 6z" />
        </svg>
        Layer Display Options
      </button>
      <div className="shrink-0 pt-3 pb-[7px] pl-[7px] text-[15px] text-[#1c1c1c]">
        <p className="h-[25px] leading-6">Presets (Ctrl+Tab):</p>
        <Combo label="Presets" value="All Layers" />
        <p className="mt-1 h-[25px] leading-6">Viewports (Shift+Tab):</p>
        <Combo label="Viewports" value="---" />
      </div>
      <div className="h-1.5 shrink-0 bg-[#dcdcdc]" />
      <PanelTitle>Selection Filter</PanelTitle>
      <div className="grid shrink-0 grid-cols-[127px_1fr] pt-[5px] pb-[5px] pl-[5px]">
        {FILTERS.map((f) => (
          <FilterBox key={f} label={f} />
        ))}
      </div>
    </aside>
  );
};

const STATS = [
  ["Pads", "14", "w-[84px]"],
  ["Vias", "351", "w-[79px]"],
  ["Track Segments", "0", "w-[173px]"],
  ["Nets", "3", "w-[82px]"],
  ["Unrouted", "0", "w-[100px]"],
];

const STATUS = [
  ["Z 5.77", "w-[118px]"],
  ["X 138.6560  Y 98.0770", "w-[250px]"],
  ["dx 138.6560  dy 98.0770  dist 169.8369", "w-[398px]"],
  ["grid 0.0010", "w-[288px]"],
  ["mm", "w-[90px]"],
  ["", "w-[255px]"],
  ["", "w-[218px]"],
];

const MENUS = ["File", "Edit", "View", "Place", "Route", "Inspect", "Tools", "Preferences", "Help"];

export default function App() {
  return (
    <div className="flex h-screen flex-col overflow-hidden bg-[#efefef] font-['Open_Sans','Noto_Sans',sans-serif]">
      <header className="flex h-[41px] shrink-0 items-center bg-[#f3f3f3] pr-5 pb-1 pl-2.5 text-[17px] text-[#8a8a8a]">
        <svg viewBox="0 0 24 24" className="h-6 w-6">
          <BoardArt />
        </svg>
        <span className="ml-2">hairpin_bowtie_filter — PCB Editor</span>
        <div className="ml-auto flex gap-[54px]">
          {["M0 8.5H16", "M1.5 .5h13v15h-13z", "M1 1l14 14M15 1L1 15"].map((d, i) => (
            <button key={d} type="button" aria-label={["Minimize", "Maximize", "Close"][i]}>
              <svg viewBox="0 0 16 16" className="h-4 w-4" fill="none" stroke="#777">
                <path d={d} />
              </svg>
            </button>
          ))}
        </div>
      </header>
      <nav className="flex h-7 shrink-0 items-center gap-6 bg-white pt-1 pl-2.5 text-[16px] text-[#6b6b6b]">
        {MENUS.map((m) => (
          <button key={m} type="button">{m}</button>
        ))}
      </nav>

      <div className="flex h-[58px] shrink-0 items-center gap-[3px] pb-0.5 pl-[7px]">
        {TOP_TOOLS.map((t, i) =>
          t === "|" ? (
            <div key={i} className="flex w-1.5 justify-center">
              <Bar />
            </div>
          ) : (
            <ToolButton key={i} name={t} />
          )
        )}
      </div>
      <div className="flex h-12 shrink-0 items-center pb-1 pl-[7px]">
        <Combo label="Track width" value="Track: use netclass width" className="w-[230px]" />
        <button type="button" aria-label="Auto track width" className="ml-2.5">
          <svg viewBox="0 0 34 36" className="h-9 w-[34px]" fill="none" stroke={G}>
            <path d="M2 2v22q0 8 8 8h14q8 0 8-8V2" strokeWidth="3" />
            <path d="M9 14h16M9 19h16" strokeWidth="2" />
            <circle cx="17" cy="32" r="4" fill={B} stroke="none" />
          </svg>
        </button>
        <div className="ml-2.5"><Bar /></div>
        <Combo label="Via size" value="Via: use netclass sizes" className="ml-1.5 w-[220px]" />
        <div className="ml-[5px]"><Bar /></div>
        <Combo label="Layer" value="B.Silkscreen" className="ml-1.5 w-[182px]" strong swatch />
        <button type="button" aria-label="Layer pair" className="ml-2">
          <svg viewBox="0 0 36 36" className="h-9 w-9">
            <path d="M0 0h36v36H0z" fill="#4d7fc4" />
            <path d="M0 0h26L10 36H0z" fill="#c83434" />
            <path d="M27 0L11 36" stroke="#fff" strokeWidth="2" strokeDasharray="3 2" />
          </svg>
        </button>
        <div className="ml-2.5"><Bar /></div>
        <Combo label="Grid" value="0.0010 mm (0.04 mils)" className="ml-1.5 w-[254px]" />
        <div className="ml-[5px]"><Bar /></div>
        <Combo label="Zoom" value="Zoom 5.00" className="ml-1.5 w-[144px]" />
      </div>

      <main className="flex min-h-0 flex-1">
        <SideBar tools={LEFT_TOOLS} className="w-[51px]" />
        <div className="min-w-0 flex-1 overflow-hidden border border-[#a5adb5]">
          <BoardCanvas />
        </div>
        <SideBar tools={RIGHT_TOOLS} className="w-[52px]" />
        <div className="w-1.5 shrink-0 bg-[#dcdcdc]" />
        <AppearancePanel />
      </main>

      <dl className="flex h-[50px] shrink-0 pl-4 text-[17px] leading-[25px] text-[#757575]">
        {STATS.map(([k, v, w]) => (
          <div key={k} className={clsx("shrink-0", w)}>
            <dt>{k}</dt>
            <dd>{v}</dd>
          </div>
        ))}
      </dl>
      <footer className="flex h-7 shrink-0 border-t border-[#d6d6d6] pt-px text-[17px] whitespace-pre text-[#1c1c1c]">
        <div className="flex-1" />
        {STATUS.map(([s, w], i) => (
          <div key={i} className={clsx("shrink-0 border-l border-[#d6d6d6] pt-[3px] pl-1 leading-[23px]", w)}>
            {s}
          </div>
        ))}
      </footer>
    </div>
  );
}
